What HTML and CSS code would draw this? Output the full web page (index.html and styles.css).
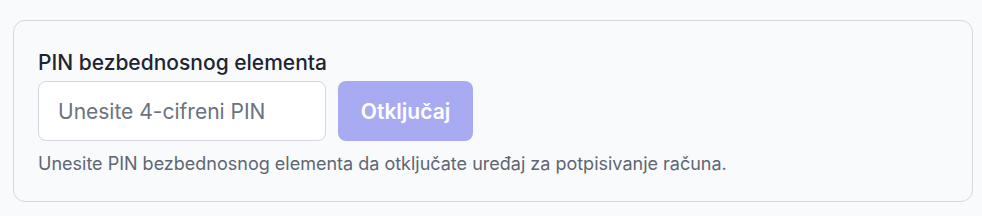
FILE: index.html
```html
<!DOCTYPE html>
<html lang="sr">
<head>
  <meta charset="UTF-8" />
  <title>PIN bezbednosnog elementa</title>
  <link rel="stylesheet" href="styles.css">
</head>
<body>

  <div class="card">
    <label class="label" for="pin">PIN bezbednosnog elementa</label>
    <div class="row">
      <input type="password" id="pin" class="pin-input" placeholder="Unesite 4-cifreni PIN" maxlength="4" />
      <button class="unlock" disabled>Otključaj</button>
    </div>
    <p class="hint">Unesite PIN bezbednosnog elementa da otključate uređaj za potpisivanje računa.</p>
  </div>

</body>
</html>
```

FILE: styles.css
```css
body {
  margin: 0;
  padding: 20px 9px 14px 13px;
  font-family: Inter, 'Noto Sans', sans-serif;
  background: #f8fafc;
  color: #1f2937;
}

.card {
  border: 1px solid #d4d7dd;
  border-radius: 12px;
  padding: 28px 24px 25px;
}

.label {
  display: block;
  font-size: 21px;
  line-height: 28px;
  font-weight: 500;
  color: #1e2532;
  margin-bottom: 4px;
}

.row {
  display: flex;
  gap: 12px;
}

.pin-input {
  width: 288px;
  box-sizing: border-box;
  height: 60px;
  padding: 0 19px;
  border: 1px solid #d4d7dd;
  border-radius: 8px;
  background: #fff;
  font-family: inherit;
  font-size: 21px;
  color: #1f2937;
  outline: none;
}

.pin-input::placeholder {
  color: #6b7280;
}

.unlock {
  width: 135px;
  height: 60px;
  padding: 0;
  border: none;
  border-radius: 8px;
  background: #a9abf2;
  color: #fff;
  font-family: inherit;
  font-size: 21px;
  font-weight: 600;
  cursor: not-allowed;
}

.hint {
  margin: 11px 0 0;
  font-size: 18px;
  line-height: 24px;
  color: #5f6673;
}
```
